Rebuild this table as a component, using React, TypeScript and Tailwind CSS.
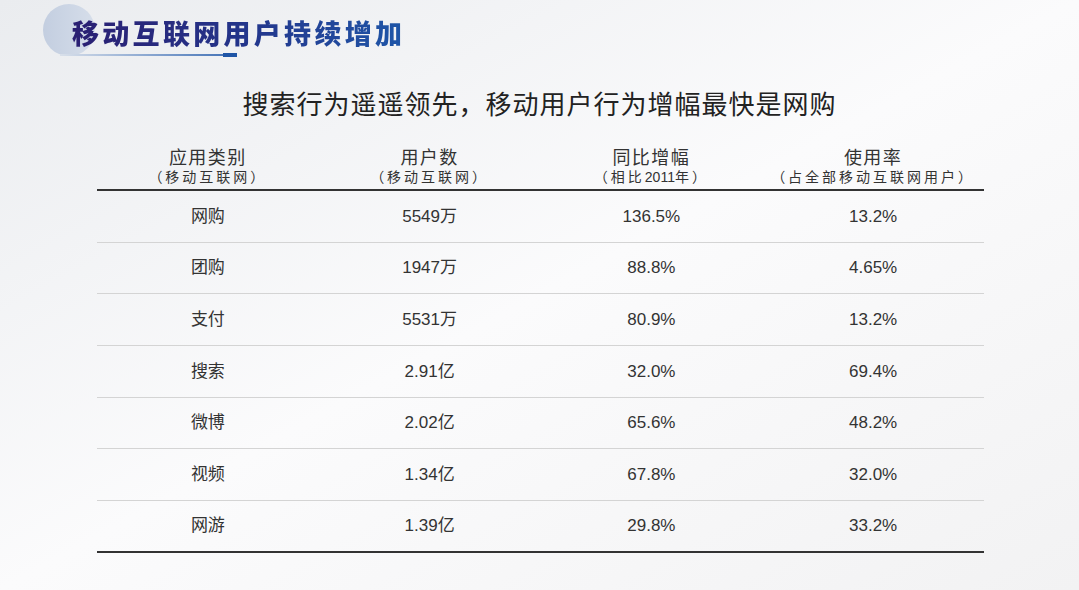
import React from 'react';

const rows = [
  ['网购', '5549万', '136.5%', '13.2%'],
  ['团购', '1947万', '88.8%', '4.65%'],
  ['支付', '5531万', '80.9%', '13.2%'],
  ['搜索', '2.91亿', '32.0%', '69.4%'],
  ['微博', '2.02亿', '65.6%', '48.2%'],
  ['视频', '1.34亿', '67.8%', '32.0%'],
  ['网游', '1.39亿', '29.8%', '33.2%'],
];

const headers: [string, React.ReactNode][] = [
  ['应用类别', '（移动互联网）'],
  ['用户数', '（移动互联网）'],
  ['同比增幅', <>（相比<span className="tracking-normal">2011</span>年）</>],
  ['使用率', '（占全部移动互联网用户）'],
];

const font = "font-['Liberation_Sans','Noto_Sans_CJK_SC',sans-serif]";

export default function App() {
  return (
    <div className={`w-[1079px] h-[590px] overflow-hidden bg-gradient-to-br from-[#eaecef] via-[#fbfbfc] to-[#f2f2f3] ${font}`}>
      {/* Title */}
      <div className="relative h-[62px]">
        <div className="absolute left-[43px] top-[4px] w-[52px] h-[52px] rounded-full bg-gradient-to-r from-[#c3cee0] to-[#d6deea]" />
        <div className="absolute left-[60px] top-[54px] w-[163px] h-[2px] bg-gradient-to-r from-[#d9e0ea] to-[#4a77b8]" />
        <div className="absolute left-[223px] top-[53px] w-[14px] h-[4px] bg-[#1f55a6]" />
        <div className="relative pl-[72px] pt-[17px]">
          <span className="font-['Noto_Sans_CJK_SC',serif] font-black text-[27px] leading-[32px] tracking-[3.3px] bg-gradient-to-r from-[#2a1f72] via-[#23348a] to-[#1e56a8] bg-clip-text text-transparent">
            移动互联网用户持续增加
          </span>
        </div>
      </div>

      {/* Subtitle */}
      <div className="mt-[25px] h-[32px] text-center text-[26px] leading-[32px] tracking-[1px] text-[#222] font-['Noto_Sans_CJK_SC',sans-serif]">
        搜索行为遥遥领先，移动用户行为增幅最快是网购
      </div>

      {/* Table */}
      <div className="ml-[97px] mt-[21px] w-[887px] text-[#333]">
        <div className="grid grid-cols-4 h-[51px] border-b-2 border-[#333]">
          {headers.map(([main, sub]) => (
            <div key={main} className="flex flex-col items-center pt-[5px]">
              <div className="text-[18px] leading-[22px] tracking-[1.5px] font-['Noto_Sans_CJK_SC',sans-serif]">{main}</div>
              <div className="text-[14px] leading-[20px] tracking-[3px]">{sub}</div>
            </div>
          ))}
        </div>
        {rows.map((r, i) => (
          <div
            key={r[0]}
            className={`grid grid-cols-4 h-[51.7px] items-center text-[17px] ${
              i === rows.length - 1 ? 'border-b-2 border-[#333]' : 'border-b border-[#d4d4d4]'
            }`}
          >
            {r.map((c, j) => (
              <div key={j} className="text-center">{c}</div>
            ))}
          </div>
        ))}
      </div>
    </div>
  );
}
